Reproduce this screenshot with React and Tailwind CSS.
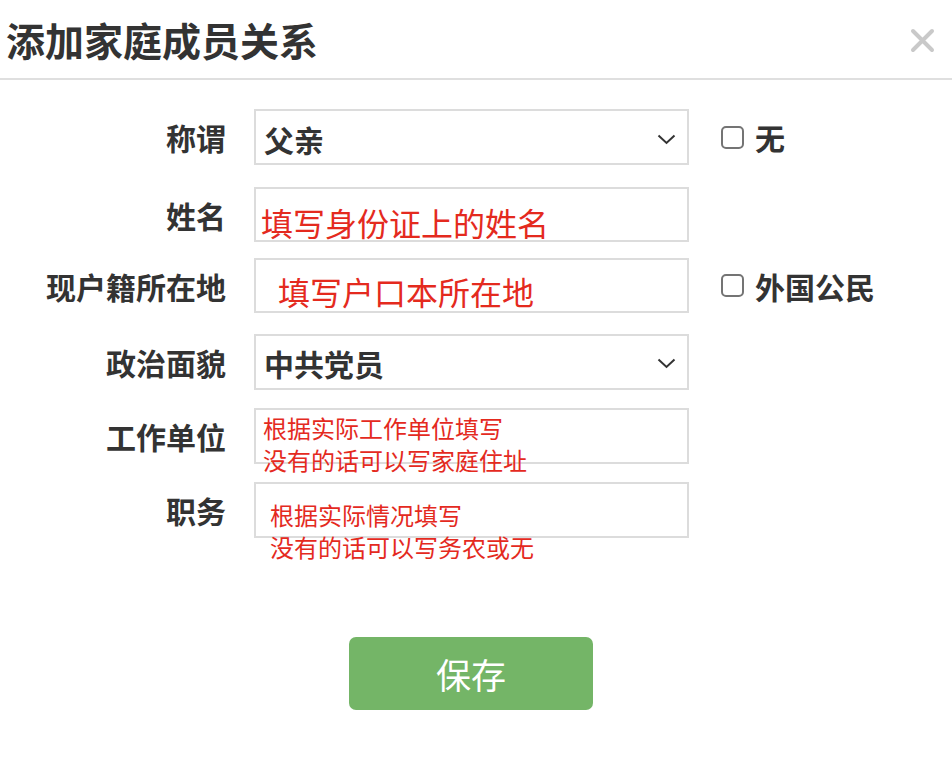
import React from 'react';

const font = "font-['Noto_Sans_CJK_SC',sans-serif]";

const Chevron = () => (
  <svg width="19" height="11" viewBox="0 0 19 11" className="shrink-0">
    <polyline points="1.5,1.5 9.5,9 17.5,1.5" fill="none" stroke="#333" strokeWidth="2" />
  </svg>
);

const Check = ({ label }) => (
  <div className="ml-[32px] flex items-center gap-[11px]">
    <span className="w-[23px] h-[23px] border-2 border-[#747474] rounded-[5px] bg-white" />
    <span className="text-[30px] font-bold text-[#333] leading-none">{label}</span>
  </div>
);

const Row = ({ label, className, children, extra }) => (
  <div className={`flex items-center ${className}`}>
    <div className="w-[226px] text-right text-[30px] font-bold text-[#333] leading-none">{label}</div>
    <div className="ml-[28px] w-[435px] h-full border-2 border-[#dcdcdc] bg-white">{children}</div>
    {extra}
  </div>
);

const App = () => {
  return (
    <div className={`w-[952px] h-[769px] bg-white ${font}`}>
      {/* header */}
      <div className="h-[80px] border-b-2 border-[#dfdfdf] flex items-center justify-between pl-[6px] pr-[17px]">
        <h1 className="text-[39px] font-bold text-[#333] leading-none tracking-[0px]">添加家庭成员关系</h1>
        <svg width="25" height="25" viewBox="0 0 25 25" className="mt-[2px]">
          <path d="M3 3 L22 22 M22 3 L3 22" stroke="#c9c9c9" strokeWidth="4" strokeLinecap="round" />
        </svg>
      </div>

      {/* form */}
      <Row label="称谓" className="mt-[29px] h-[56px]" extra={<Check label="无" />}>
        <div className="h-full flex items-center justify-between pl-[8px] pr-[11px] pt-[4px]">
          <span className="text-[30px] font-bold text-[#333] leading-none">父亲</span>
          <Chevron />
        </div>
      </Row>

      <Row label="姓名" className="mt-[22px] h-[55px]">
        <div className="pl-[5px] pt-[17px] text-[32px] text-[#e42a1e] leading-none whitespace-nowrap">填写身份证上的姓名</div>
      </Row>

      <Row label="现户籍所在地" className="mt-[16px] h-[55px]" extra={<Check label="外国公民" />}>
        <div className="pl-[22px] pt-[15px] text-[32px] text-[#e42a1e] leading-none whitespace-nowrap">填写户口本所在地</div>
      </Row>

      <Row label="政治面貌" className="mt-[21px] h-[56px]">
        <div className="h-full flex items-center justify-between pl-[8px] pr-[11px] pt-[2px]">
          <span className="text-[30px] font-bold text-[#333] leading-none">中共党员</span>
          <Chevron />
        </div>
      </Row>

      <Row label="工作单位" className="mt-[18px] h-[56px]">
        <div className="pl-[7px] pt-[2px] text-[24px] text-[#e42a1e] leading-[32px] whitespace-nowrap">
          <div>根据实际工作单位填写</div>
          <div>没有的话可以写家庭住址</div>
        </div>
      </Row>

      <Row label="职务" className="mt-[18px] h-[56px]">
        <div className="pl-[14px] pt-[15px] text-[24px] text-[#e42a1e] leading-[32px] whitespace-nowrap">
          <div>根据实际情况填写</div>
          <div>没有的话可以写务农或无</div>
        </div>
      </Row>

      <div className="mt-[99px] pl-[349px]">
        <button className="w-[244px] h-[73px] rounded-[7px] bg-[#74b567] text-white text-[35px] leading-none">保存</button>
      </div>
    </div>
  );
};

export default App;
